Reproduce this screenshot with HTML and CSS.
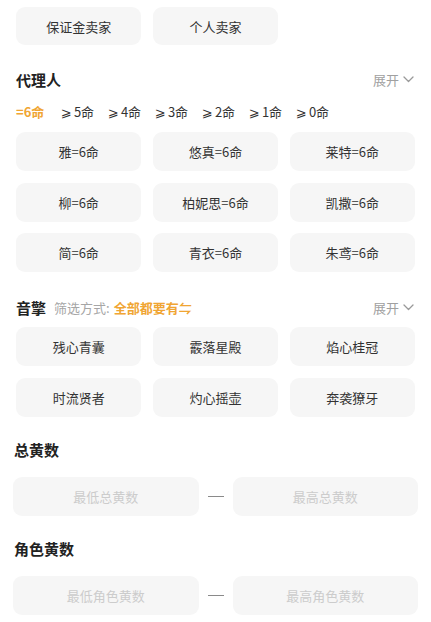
FILE: index.html
```html
<!DOCTYPE html>
<html lang="zh-CN">
<head>
<meta charset="utf-8">
<title>筛选</title>
<link rel="stylesheet" href="styles.css">
</head>
<body>
<div class="page">
  <div class="grid seller">
    <div class="chip">保证金卖家</div>
    <div class="chip">个人卖家</div>
  </div>

  <div class="head head-agent">
    <div class="head-left"><span class="title">代理人</span></div>
    <div class="expand">展开<svg class="chev" width="11" height="7" viewBox="0 0 11 7"><path d="M1 1 L5.5 5.5 L10 1" fill="none" stroke="#999" stroke-width="1.3" stroke-linecap="round" stroke-linejoin="round"/></svg></div>
  </div>

  <div class="levels">
    <span class="lv active">=6命</span>
    <span class="lv"><span class="ge">⩾</span>5命</span>
    <span class="lv"><span class="ge">⩾</span>4命</span>
    <span class="lv"><span class="ge">⩾</span>3命</span>
    <span class="lv"><span class="ge">⩾</span>2命</span>
    <span class="lv"><span class="ge">⩾</span>1命</span>
    <span class="lv"><span class="ge">⩾</span>0命</span>
  </div>

  <div class="grid agents">
    <div class="chip">雅=6命</div>
    <div class="chip">悠真=6命</div>
    <div class="chip">莱特=6命</div>
    <div class="chip">柳=6命</div>
    <div class="chip">柏妮思=6命</div>
    <div class="chip">凯撒=6命</div>
    <div class="chip">简=6命</div>
    <div class="chip">青衣=6命</div>
    <div class="chip">朱鸢=6命</div>
  </div>

  <div class="head head-engine">
    <div class="head-left">
      <span class="title">音擎</span>
      <span class="filter-label">筛选方式:</span>
      <span class="filter-value">全部都要有⇋</span>
    </div>
    <div class="expand">展开<svg class="chev" width="11" height="7" viewBox="0 0 11 7"><path d="M1 1 L5.5 5.5 L10 1" fill="none" stroke="#999" stroke-width="1.3" stroke-linecap="round" stroke-linejoin="round"/></svg></div>
  </div>

  <div class="grid engines">
    <div class="chip">残心青囊</div>
    <div class="chip">霰落星殿</div>
    <div class="chip">焰心桂冠</div>
    <div class="chip">时流贤者</div>
    <div class="chip">灼心摇壶</div>
    <div class="chip">奔袭獠牙</div>
  </div>
</div>

<div class="range-block">
  <div class="range-title first">总黄数</div>
  <div class="range">
    <div class="input">最低总黄数</div>
    <div class="dash"></div>
    <div class="input">最高总黄数</div>
  </div>
  <div class="range-title">角色黄数</div>
  <div class="range">
    <div class="input">最低角色黄数</div>
    <div class="dash"></div>
    <div class="input">最高角色黄数</div>
  </div>
</div>
</body>
</html>
```

FILE: styles.css
```css
* { box-sizing: border-box; }
html, body {
  margin: 0;
  padding: 0;
  background: #ffffff;
}
body {
  font-family: "Noto Sans CJK SC", "Noto Sans", "DejaVu Sans", sans-serif;
  color: #333333;
  width: 431px;
  overflow: hidden;
}
.page {
  padding: 0 16px;
}
.grid {
  display: grid;
  grid-template-columns: repeat(3, 1fr);
  column-gap: 11.5px;
  row-gap: 11.5px;
}
.seller {
  margin-top: 7px;
}
.chip {
  height: 39px;
  border-radius: 9px;
  background: #f6f6f6;
  display: flex;
  align-items: center;
  justify-content: center;
  font-size: 13px;
  color: #333333;
  white-space: nowrap;
}
.seller .chip { height: 38px; }

.head {
  display: flex;
  justify-content: space-between;
  align-items: center;
  height: 22px;
}
.head-agent { margin-top: 23px; }
.head-engine { margin-top: 24px; }
.head-left {
  display: flex;
  align-items: center;
}
.title {
  font-size: 15px;
  font-weight: 700;
  color: #222222;
}
.filter-label {
  font-size: 13px;
  color: #a6a6a6;
  margin-left: 8px;
}
.filter-value {
  font-size: 13px;
  color: #f0a533;
  font-weight: 700;
  margin-left: 4px;
}
.expand {
  display: flex;
  align-items: center;
  font-size: 13px;
  color: #a0a0a0;
  margin-right: 1px;
}
.chev {
  margin-left: 4px;
  margin-top: 1px;
}
.levels {
  display: flex;
  align-items: center;
  height: 20px;
  margin-top: 11px;
}
.lv {
  font-size: 13px;
  color: #333333;
  width: 47px;
  white-space: nowrap;
}
.ge {
  font-family: "DejaVu Sans", sans-serif;
  font-size: 13px;
  margin-right: 2px;
}
.lv.active {
  color: #f0a533;
  font-weight: 700;
  width: 45px;
}
.agents { margin-top: 11px; }
.engines { margin-top: 9px; }

.range-block {
  padding: 0 13px;
}
.range-title {
  height: 22px;
  line-height: 22px;
  font-size: 15px;
  font-weight: 700;
  color: #222222;
  margin-top: 22px;
  padding-left: 1px;
}
.range-title.first { margin-top: 22.5px; }
.range {
  display: flex;
  align-items: center;
  margin-top: 16px;
}
.input {
  flex: 1;
  height: 39px;
  border-radius: 9px;
  background: #f6f6f6;
  display: flex;
  align-items: center;
  justify-content: center;
  font-size: 13px;
  color: #cccccc;
}
.dash {
  width: 16px;
  height: 1px;
  background: #8a8a8a;
  margin: 0 9px;
}
```
